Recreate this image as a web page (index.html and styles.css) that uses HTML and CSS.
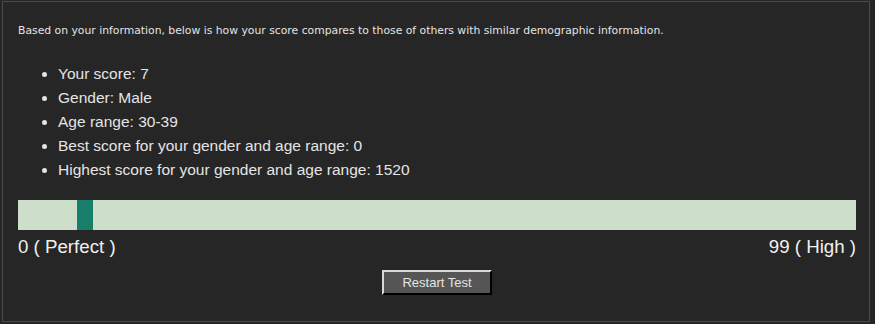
FILE: index.html
```html
<!DOCTYPE html>
<html lang="en">

<head>
    <meta charset="UTF-8">
    <title>Your Results</title>
    <link rel="stylesheet" href="styles.css">
</head>

<body>
    <div class="panel">
        <p class="intro">Based on your information, below is how your score compares to those of others with similar demographic information.</p>
        <ul class="facts">
            <li>Your score: 7</li>
            <li>Gender: Male</li>
            <li>Age range: 30-39</li>
            <li>Best score for your gender and age range: 0</li>
            <li>Highest score for your gender and age range: 1520</li>
        </ul>
        <div class="scale">
            <div class="marker" style="left: 7.07%"></div>
        </div>
        <div class="scale-labels">
            <span>0 ( Perfect )</span>
            <span>99 ( High )</span>
        </div>
        <div class="actions">
            <button class="btn" type="button">Restart Test</button>
        </div>
    </div>
</body>

</html>
```

FILE: styles.css
```css
body {
    margin: 0;
    background-color: #262626;
    font-family: "Liberation Sans", Arial, sans-serif;
    color: #e4e4e4;
}

.panel {
    box-sizing: border-box;
    width: 868px;
    height: 321px;
    margin: 1px 0 0 2px;
    padding: 22px 13px 0 15px;
    border: 1px solid #4a4a4a;
}

.intro {
    margin: 0;
    font-family: "DejaVu Sans", Verdana, sans-serif;
    font-size: 10.8px;
    line-height: 14px;
}

.facts {
    margin: 24px 0 0;
    padding-left: 40px;
    font-size: 15.5px;
    line-height: 24px;
}

.scale {
    position: relative;
    height: 30px;
    margin-top: 18px;
    background-color: #cddecb;
}

.marker {
    position: absolute;
    top: 0;
    width: 16px;
    height: 30px;
    background-color: #177f69;
}

.scale-labels {
    display: flex;
    justify-content: space-between;
    margin-top: 7px;
    font-size: 18.7px;
    line-height: 20px;
    color: #f0f0f0;
}

.actions {
    display: flex;
    justify-content: center;
    margin-top: 13px;
}

.btn {
    width: 110px;
    height: 25px;
    padding: 0;
    background-color: #565656;
    color: #e4e4e4;
    font-family: "Liberation Sans", Arial, sans-serif;
    font-size: 13px;
    border: 2px solid;
    border-color: #d8d8d8 #000 #000 #d8d8d8;
}
```
